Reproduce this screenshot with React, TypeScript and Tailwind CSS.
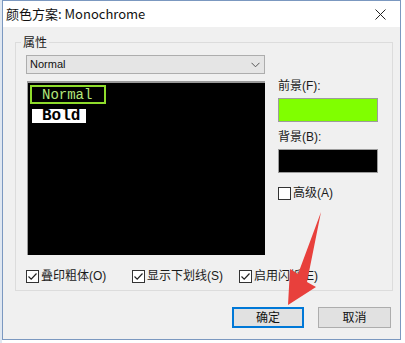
import React from 'react';

const ui = { fontFamily: '"Liberation Sans", "Noto Sans CJK SC", sans-serif' };
const mono = { fontFamily: '"Liberation Mono", monospace' };

const CheckBox = ({ checked, label }: { checked: boolean; label: string }) => (
    <div className="flex items-center h-[16px] text-[12px] text-[#1a1a1a]">
        <div className="w-[13px] h-[13px] border border-[#333] bg-white flex items-center justify-center">
            {checked && (
                <svg width="11" height="11" viewBox="0 0 11 11">
                    <path d="M1.5 5.5 L4.2 8.2 L9.5 2.5" fill="none" stroke="#222" strokeWidth="1.2" />
                </svg>
            )}
        </div>
        <span className="ml-[2px] leading-[16px]">{label}</span>
    </div>
);

const App = () => {
    return (
        <div className="w-[405px] h-[343px] bg-white relative overflow-hidden flex" style={ui}>
            <div className="w-[2px] h-full bg-[#dfe7f1]" />
            <div className="w-[399px] h-[340px] border border-[#7b98c0] flex flex-col bg-[#f0f0f0]">
                {/* title bar */}
                <div className="h-[26px] bg-white flex items-center justify-between pl-[3px] pr-[14px]">
                    <span className="text-[13px] text-[#111]" style={{ fontFamily: '"Noto Sans CJK SC", sans-serif' }}>
                        颜色方案: Monochrome
                    </span>
                    <svg width="11" height="11" viewBox="0 0 11 11">
                        <path d="M0.5 0.5 L10.5 10.5 M10.5 0.5 L0.5 10.5" stroke="#222" strokeWidth="1" />
                    </svg>
                </div>

                {/* group box */}
                <div className="relative mt-[15px] ml-[12px] w-[378px] h-[249px] border border-[#dcdcdc]">
                    <span
                        className="absolute -top-[10px] left-[5px] px-[2px] bg-[#f0f0f0] text-[12px] text-[#1a1a1a] leading-[18px]"
                        style={{ fontFamily: '"Noto Sans CJK SC", sans-serif' }}
                    >
                        属性
                    </span>
                    <div className="pt-[12px] pl-[10px]">
                        <div className="flex">
                            <div className="w-[239px]">
                                <div className="h-[19px] border border-[#adadad] bg-[#e5e5e5] flex items-center justify-between pl-[3px] pr-[4px]">
                                    <span className="text-[11px] text-[#111]">Normal</span>
                                    <svg width="9" height="6" viewBox="0 0 9 6">
                                        <path d="M0.5 0.8 L4.5 4.8 L8.5 0.8" fill="none" stroke="#555" strokeWidth="1" />
                                    </svg>
                                </div>
                                <div className="mt-[7px] ml-[1px] w-[238px] h-[174px] bg-black border-t-2 border-l border-[#9a9a9a] pt-[2px] pl-[2px]">
                                    <div className="w-[76px] h-[19px] border-2 border-[#8fdc2c] flex items-center pl-[10px]">
                                        <span className="text-[14px] leading-[14px] text-[#b4e67c]" style={mono}>Normal</span>
                                    </div>
                                    <div className="mt-[5px] ml-[2px] w-[54px] h-[14px] bg-white flex items-center pl-[10px]">
                                        <span className="text-[16px] leading-[14px] font-bold text-black" style={mono}>Bold</span>
                                    </div>
                                </div>
                            </div>
                            <div className="ml-[13px] w-[100px] text-[12px] text-[#1a1a1a]">
                                <div className="mt-[23px] h-[16px] leading-[16px]">前景(F):</div>
                                <div className="mt-[4px] h-[24px] border border-[#9c9c9c] bg-[#80ff00]" />
                                <div className="mt-[7px] h-[16px] leading-[16px]">背景(B):</div>
                                <div className="mt-[4px] h-[24px] border border-[#9c9c9c] bg-black" />
                                <div className="mt-[12px]">
                                    <CheckBox checked={false} label="高级(A)" />
                                </div>
                            </div>
                        </div>
                        <div className="flex mt-[13px]">
                            <div className="w-[106px]">
                                <CheckBox checked label="叠印粗体(O)" />
                            </div>
                            <div className="w-[107px]">
                                <CheckBox checked label="显示下划线(S)" />
                            </div>
                            <CheckBox checked label="启用闪烁(E)" />
                        </div>
                    </div>
                </div>

                {/* buttons */}
                <div className="mt-[16px] flex justify-end pr-[9px] gap-[14px] text-[12px] text-[#111]">
                    <button className="w-[72px] h-[21px] border-2 border-[#0078d7] bg-[#e1e1e1] flex items-center justify-center">
                        确定
                    </button>
                    <button className="w-[73px] h-[21px] border border-[#adadad] bg-[#e1e1e1] flex items-center justify-center">
                        取消
                    </button>
                </div>
            </div>

            {/* annotation arrow */}
            <svg className="absolute left-0 top-0 pointer-events-none" width="405" height="343" viewBox="0 0 405 343">
                <polygon points="321,212 307,282 316,287 288,305 290,269 298,274" fill="#e8403c" />
            </svg>
        </div>
    );
};

export default App;
